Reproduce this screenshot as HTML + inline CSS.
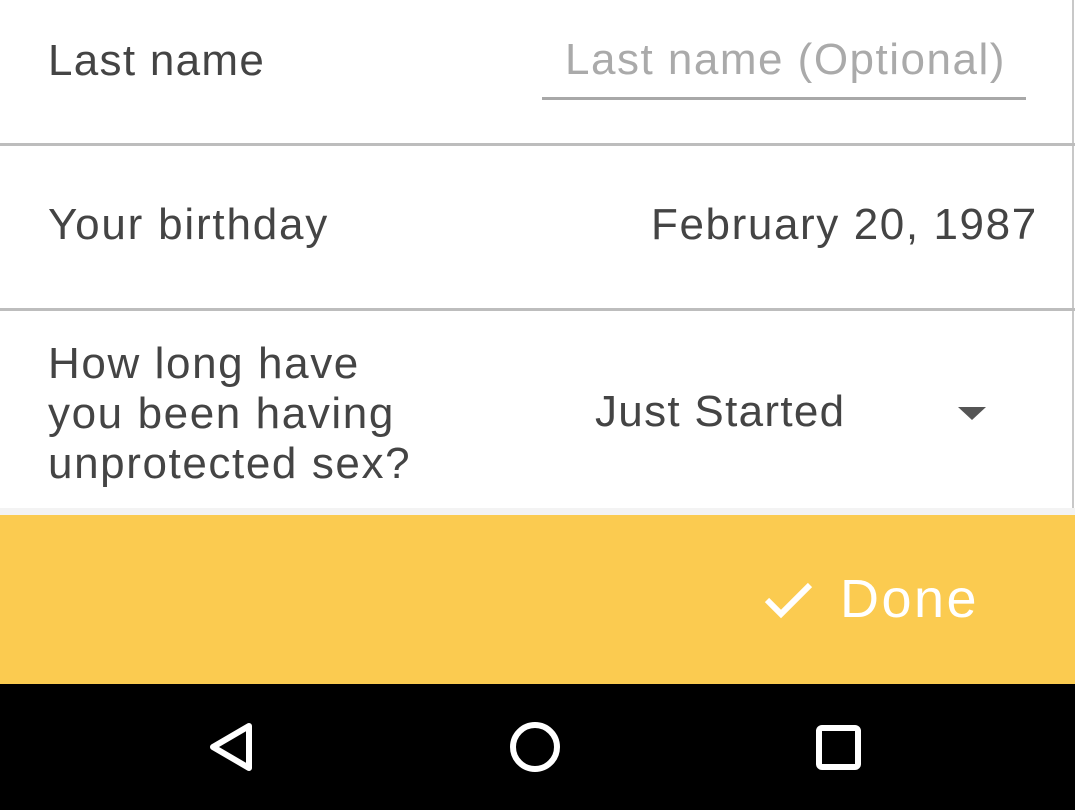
<!DOCTYPE html>
<html><head><style>
body{margin:0;width:1075px;height:810px;overflow:hidden;background:#fff;font-family:"Liberation Sans",sans-serif;position:relative}
.t{position:absolute;color:#444;font-size:44px;white-space:nowrap;letter-spacing:1.3px}
.hr{position:absolute;left:0;width:1075px;height:3px;background:#bdbdbd}
</style></head><body>
<div style="position:absolute;right:1px;top:0;width:2px;height:512px;background:#c8c8c8"></div>
<div class="t" style="left:48px;top:36px">Last name</div>
<div class="t" style="left:565px;top:35px;color:#aaa;letter-spacing:1.5px">Last name (Optional)</div>
<div style="position:absolute;left:542px;top:97px;width:484px;height:3px;background:#a8a8a8"></div>
<div class="hr" style="top:143px"></div>
<div class="t" style="left:48px;top:200px;letter-spacing:1.8px">Your birthday</div>
<div class="t" style="left:651px;top:200px;letter-spacing:1.6px">February 20, 1987</div>
<div class="hr" style="top:308px"></div>
<div class="t" style="left:48px;top:339px;line-height:50px;letter-spacing:1.6px">How long have<br>you been having<br>unprotected sex?</div>
<div class="t" style="left:595px;top:387px">Just Started</div>
<svg style="position:absolute;left:957px;top:406px" width="30" height="16"><path d="M1 1 L15 14 L29 1 Z" fill="#555"/></svg>
<div style="position:absolute;left:0;top:508px;width:1075px;height:7px;background:#f3f3f3"></div>
<div style="position:absolute;left:0;top:515px;width:1075px;height:169px;background:#fbcb50"></div>
<svg style="position:absolute;left:764px;top:580px" width="50" height="40"><path d="M3 20 L17 34 L46 5" stroke="#fff" stroke-width="6" fill="none"/></svg>
<div class="t" style="left:840px;top:568px;color:#fff;font-size:54px;letter-spacing:2.5px">Done</div>
<div style="position:absolute;left:0;top:684px;width:1075px;height:126px;background:#000"></div>
<svg style="position:absolute;left:0;top:684px" width="1075" height="126">
<path d="M249 42 L213 63 L249 84 Z" stroke="#fff" stroke-width="6" fill="none" stroke-linejoin="round"/>
<circle cx="535" cy="63" r="22" stroke="#fff" stroke-width="6" fill="none"/>
<rect x="819" y="44" width="39" height="39" rx="3" stroke="#fff" stroke-width="6" fill="none"/>
</svg>
</body></html>
